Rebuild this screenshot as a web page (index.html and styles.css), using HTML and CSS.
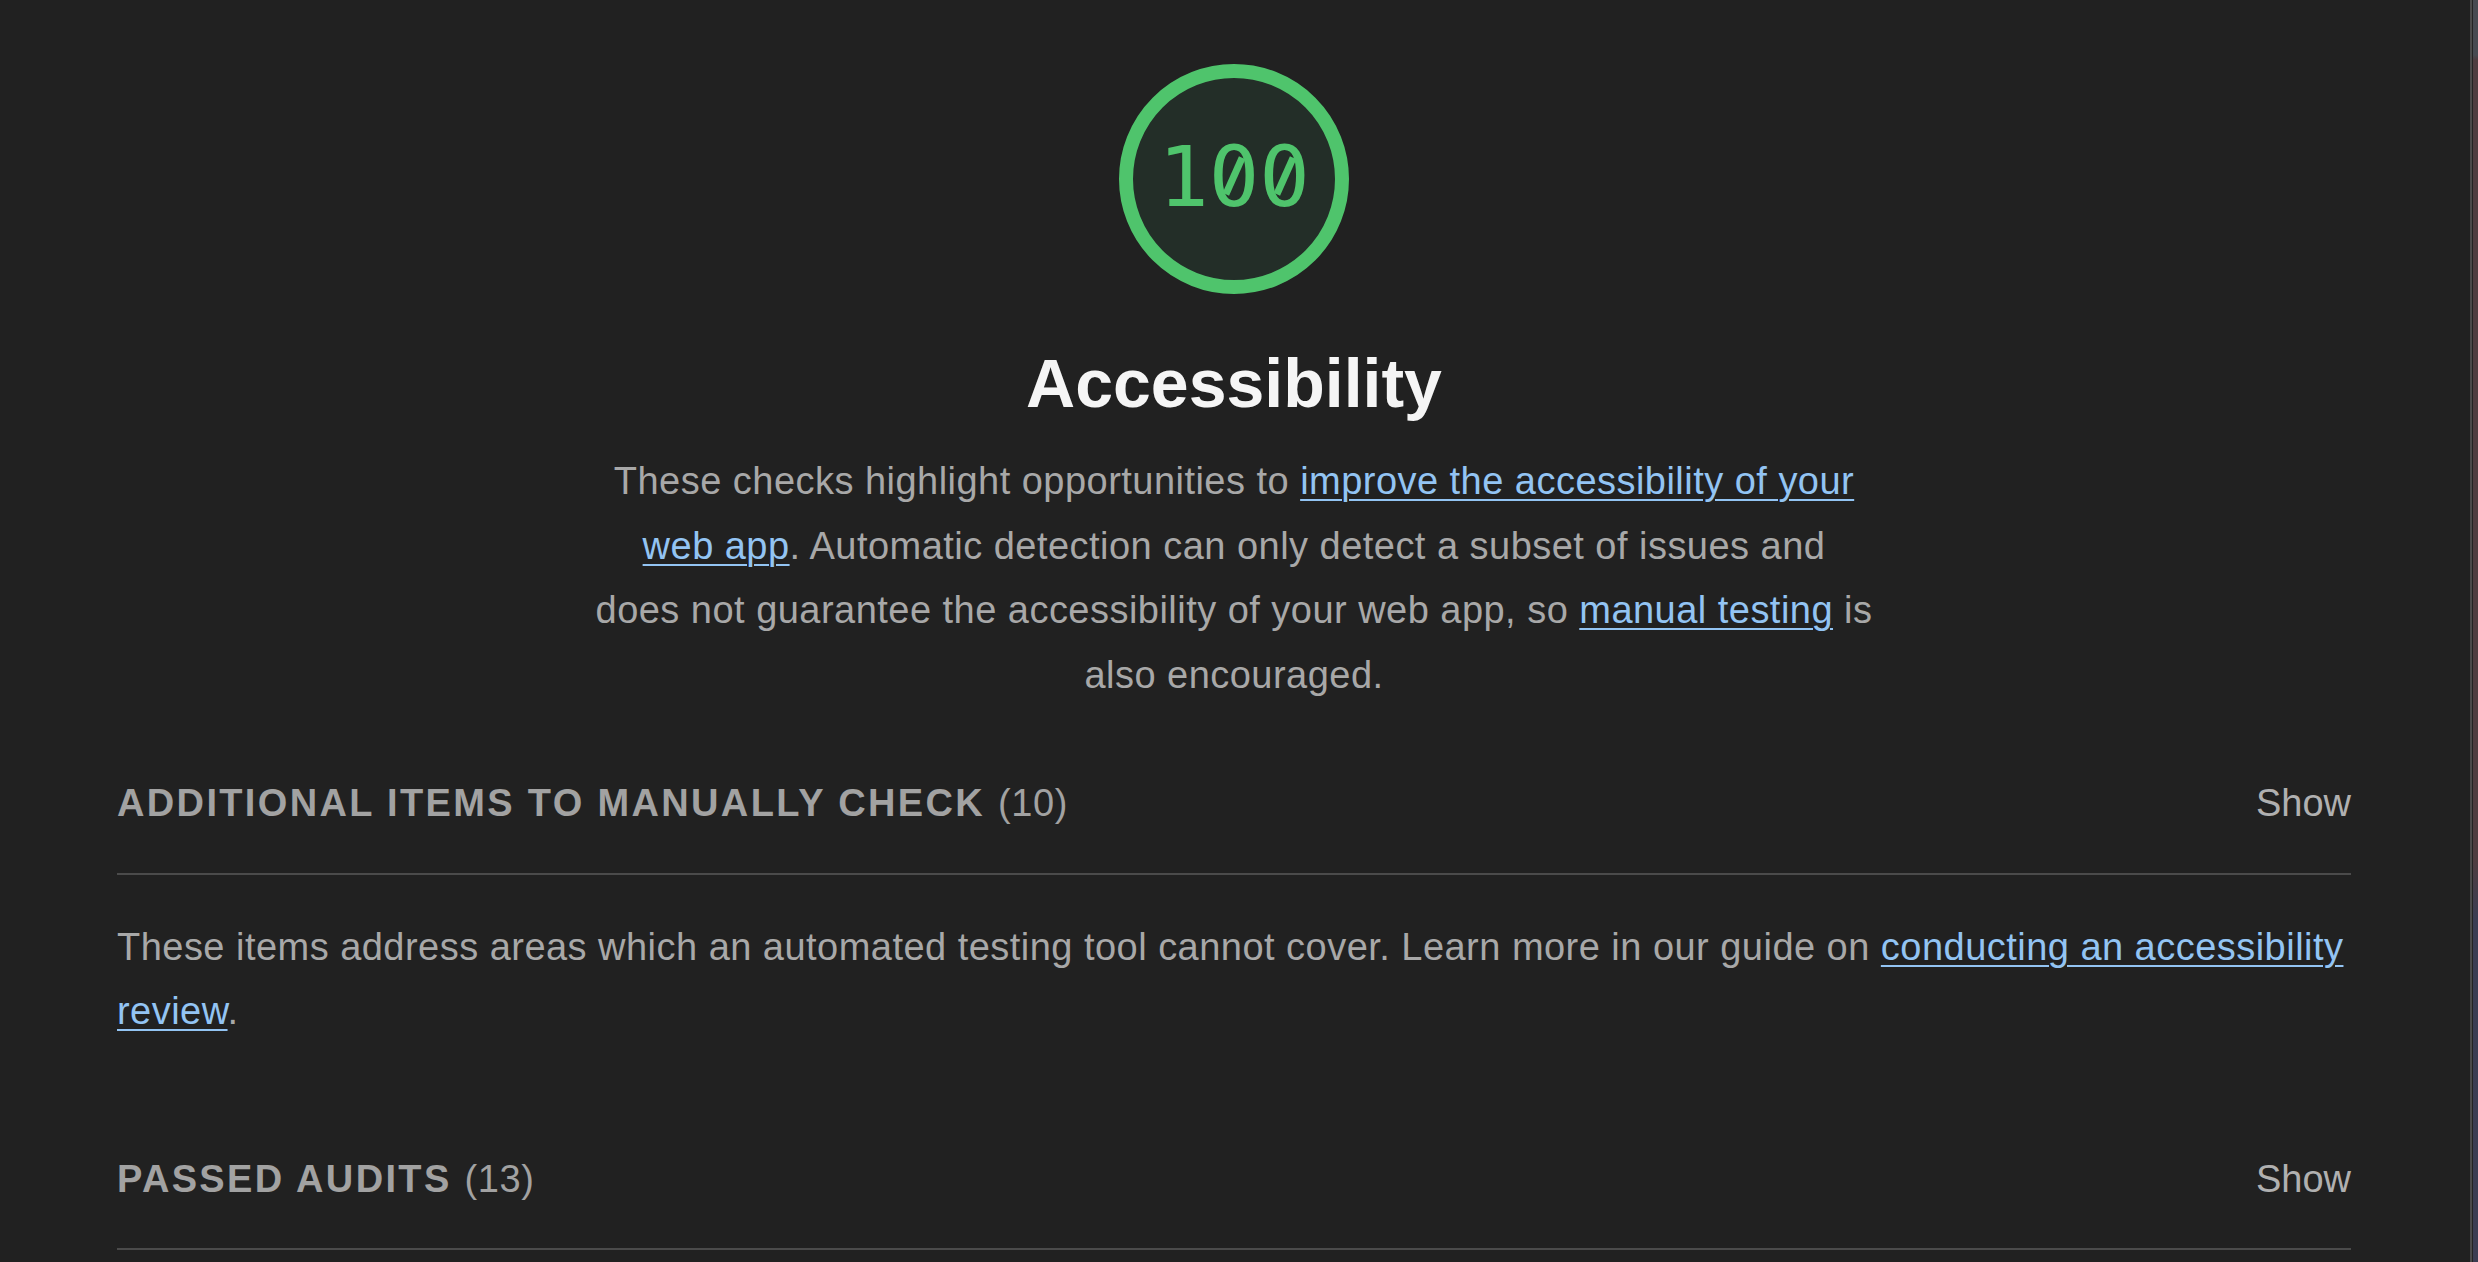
FILE: index.html
```html
<!DOCTYPE html>
<html lang="en">
<head>
<meta charset="utf-8">
<title>Accessibility</title>
<link rel="stylesheet" href="styles.css">
</head>
<body>
<div class="window">
  <main class="report">
    <header class="cat-header">
      <div class="gauge"><span class="gauge-value">1<span class="zero">0</span><span class="zero">0</span></span></div>
      <h1 class="cat-title">Accessibility</h1>
      <p class="cat-desc">These checks highlight opportunities to <a href="#">improve the accessibility of your web app</a>. Automatic detection can only detect a subset of issues and<br>does not guarantee the accessibility of your web app, so <a href="#">manual testing</a> is also encouraged.</p>
    </header>

    <section class="clump clump-manual">
      <div class="clump-head">
        <span class="clump-title">Additional items to manually check <span class="clump-count">(10)</span></span>
        <span class="clump-toggle">Show</span>
      </div>
      <p class="clump-desc">These items address areas which an automated testing tool cannot cover. Learn more in our guide on <a href="#">conducting an accessibility review</a>.</p>
    </section>

    <section class="clump clump-passed">
      <div class="clump-head">
        <span class="clump-title">Passed audits <span class="clump-count">(13)</span></span>
        <span class="clump-toggle">Show</span>
      </div>
    </section>
  </main>
  <div class="edge"><div class="edge-line"></div><div class="edge-gap"></div><div class="edge-strip"></div></div>
</div>
</body>
</html>
```

FILE: styles.css
```css
html, body {
  margin: 0;
  padding: 0;
  background: #212121;
  height: 100%;
  overflow: hidden;
}

.window {
  display: flex;
  height: 1262px;
}

.report {
  flex: 1;
  padding: 64px 119px 0 117px;
  font-family: "Liberation Sans", Arial, Helvetica, sans-serif;
  font-size: 38px;
  letter-spacing: 0.47px;
  line-height: 64.5px;
  color: #a8a8a8;
}

.cat-header {
  display: flex;
  flex-direction: column;
  align-items: center;
}

.gauge {
  width: 230px;
  height: 230px;
  box-sizing: border-box;
  border: 14px solid #4fc46c;
  border-radius: 50%;
  background: #232e28;
  display: flex;
  align-items: center;
  justify-content: center;
}

.gauge-value {
  font-family: "DejaVu Sans Mono", "Liberation Mono", monospace;
  font-size: 84px;
  line-height: 84px;
  letter-spacing: 0;
  color: #4fc46c;
  margin-top: -4px;
}

.zero {
  position: relative;
  display: inline-block;
}

.zero::before {
  content: "";
  position: absolute;
  left: 25.3px;
  top: 40.5px;
  width: 13px;
  height: 24px;
  background: #232e28;
  transform: translate(-50%, -50%);
}

.zero::after {
  content: "";
  position: absolute;
  left: 25.3px;
  top: 40.5px;
  width: 7px;
  height: 40px;
  background: #4fc46c;
  transform: translate(-50%, -50%) rotate(24deg);
}

.cat-title {
  margin: 48px 0 0;
  font-size: 68px;
  line-height: 82px;
  letter-spacing: 0;
  font-weight: 700;
  color: #f5f5f5;
}

.cat-desc {
  margin: 25px 0 0;
  max-width: 1285px;
  text-align: center;
}

a {
  color: #93c4f3;
  text-decoration: underline;
  text-decoration-thickness: 2px;
  text-underline-offset: 5px;
}

.clump-manual {
  margin-top: 64px;
}

.clump-passed {
  margin-top: 103px;
}

.clump-head {
  display: flex;
  justify-content: space-between;
  align-items: baseline;
  padding-bottom: 37px;
  border-bottom: 2px solid #4b4b4b;
}

.clump-title {
  text-transform: uppercase;
  font-weight: 700;
  letter-spacing: 2.35px;
  color: #a2a2a2;
}

.clump-count {
  font-weight: 400;
  letter-spacing: 0.6px;
}

.clump-toggle {
  color: #b0b0b0;
  letter-spacing: 0;
}

.clump-desc {
  margin: 40px 0 0;
}

.edge {
  width: 8px;
  display: flex;
}

.edge-line {
  width: 2px;
  background: #4a4a4a;
}

.edge-gap {
  width: 1px;
  background: #232323;
}

.edge-strip {
  flex: 1;
  background: linear-gradient(to bottom, #474a51 0, #474a51 55px, #4e3d40 60px, #4e3d40 860px, #3a3d53 920px, #3b3d52 100%);
}
```
